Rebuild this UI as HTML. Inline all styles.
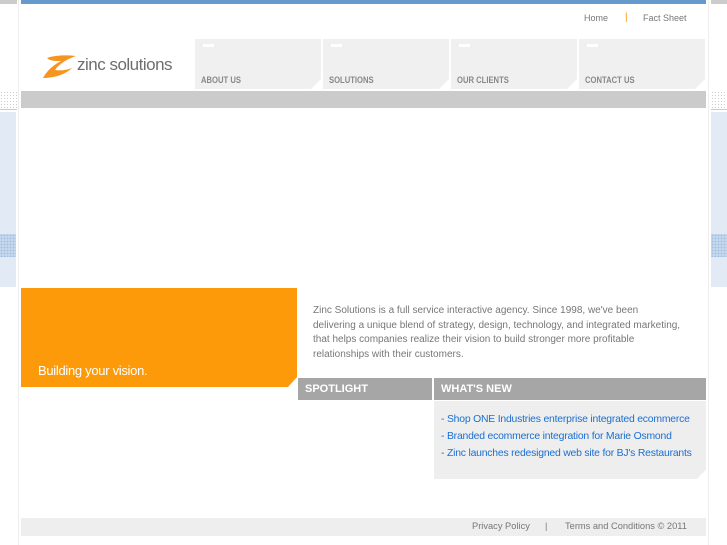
<!DOCTYPE html>
<html><head><meta charset="utf-8"><style>
*{margin:0;padding:0;box-sizing:border-box}
body{width:727px;height:545px;background:#fff;position:relative;overflow:hidden;font-family:"Liberation Sans",sans-serif}
.a{position:absolute}
.dots{background-image:radial-gradient(#ccc 0.6px,transparent 0.8px);background-size:3px 3px}
.bdots{background-color:#c5d7ec;background-image:radial-gradient(#9fbde0 0.7px,transparent 0.9px);background-size:3px 3px}
.tab{position:absolute;top:39px;width:126px;height:50px;background:#f0f0f0;clip-path:polygon(0 0,100% 0,100% 80%,calc(100% - 10px) 100%,0 100%)}
.tab i{position:absolute;left:8px;top:5px;width:11px;height:3px;background:#fff}
.tab b{position:absolute;left:6px;top:36px;font-size:9px;color:#888;font-weight:bold;transform:scaleX(.85);transform-origin:left;letter-spacing:0}
.hd{position:absolute;top:378px;height:22px;background:#a6a6a6;color:#fff;font-weight:bold;font-size:11px;line-height:22px;padding-left:7px}
.lk{position:absolute;left:441px;font-size:10.4px;color:#1a6fd0;letter-spacing:-.2px;white-space:nowrap}
</style></head><body>
<div class="a" style="left:0;top:0;width:17px;height:4px;background:#ccc"></div>
<div class="a dots" style="left:0;top:91px;width:17px;height:17px"></div>
<div class="a" style="left:0;top:109px;width:17px;height:1px;background:#ccc"></div>
<div class="a" style="left:0;top:112px;width:16px;height:175px;background:#e1eaf5"></div>
<div class="a bdots" style="left:0;top:234px;width:16px;height:23px"></div>
<div class="a" style="left:18px;top:0;width:1px;height:545px;background:#eee"></div>
<div class="a" style="left:708px;top:0;width:1px;height:545px;background:#eee"></div>
<div class="a" style="left:711px;top:0;width:16px;height:4px;background:#ccc"></div>
<div class="a dots" style="left:711px;top:91px;width:16px;height:17px"></div>
<div class="a" style="left:711px;top:109px;width:16px;height:1px;background:#ccc"></div>
<div class="a" style="left:711px;top:112px;width:16px;height:175px;background:#e1eaf5"></div>
<div class="a bdots" style="left:711px;top:234px;width:16px;height:23px"></div>
<div class="a" style="left:21px;top:0;width:685px;height:4px;background:#6699cc"></div>
<div class="a" style="left:584px;top:13px;font-size:9px;color:#777">Home</div>
<div class="a" style="left:625px;top:12px;font-size:10px;color:#f90">|</div>
<div class="a" style="left:643px;top:13px;font-size:9px;color:#777">Fact Sheet</div>
<svg class="a" style="left:41px;top:54px" width="36" height="26" viewBox="0 0 36 26"><path d="M6 4 C14 1,26 1,35 2 C26 5,18 10,14 16 C20 17,26 16,31 14 C24 21,12 24,2 24 C4 20,10 12,20 7 C14 7,9 7,6 4Z" fill="#f7941d"/></svg>
<div class="a" style="left:77px;top:55px;font-size:17px;color:#6d6e71;letter-spacing:-.5px">zinc solutions</div>
<div class="tab" style="left:195px"><i></i><b>ABOUT US</b></div>
<div class="tab" style="left:323px"><i></i><b>SOLUTIONS</b></div>
<div class="tab" style="left:451px"><i></i><b>OUR CLIENTS</b></div>
<div class="tab" style="left:579px"><i></i><b>CONTACT US</b></div>
<div class="a" style="left:21px;top:91px;width:685px;height:17px;background:#cbcbcb"></div>
<div class="a" style="left:21px;top:288px;width:276px;height:99px;background:#fd9a0a;clip-path:polygon(0 0,100% 0,100% 90%,calc(100% - 9px) 100%,0 100%)"></div>
<div class="a" style="left:38px;top:363px;font-size:13px;color:#fff;letter-spacing:-.3px">Building your vision.</div>
<div class="a" style="left:313px;top:304px;font-size:10px;line-height:14.6px;color:#777;white-space:nowrap">Zinc Solutions is a full service interactive agency. Since 1998, we've been<br>delivering a unique blend of strategy, design, technology, and integrated marketing,<br>that helps companies realize their vision to build stronger more profitable<br>relationships with their customers.</div>
<div class="hd" style="left:298px;width:134px">SPOTLIGHT</div>
<div class="hd" style="left:434px;width:272px">WHAT'S NEW</div>
<div class="a" style="left:434px;top:401px;width:272px;height:78px;background:#eee;clip-path:polygon(0 0,100% 0,100% 88%,calc(100% - 9px) 100%,0 100%)"></div>
<div class="lk" style="top:414px">- Shop ONE Industries enterprise integrated ecommerce</div>
<div class="lk" style="top:431px">- Branded ecommerce integration for Marie Osmond</div>
<div class="lk" style="top:448px">- Zinc launches redesigned web site for BJ's Restaurants</div>
<div class="a" style="left:21px;top:518px;width:685px;height:18px;background:#eee"></div>
<div class="a" style="left:472px;top:521px;font-size:9.3px;color:#777">Privacy Policy</div>
<div class="a" style="left:545px;top:521px;font-size:9px;color:#777">|</div>
<div class="a" style="left:565px;top:521px;font-size:9.3px;color:#777">Terms and Conditions © 2011</div>
</body></html>
